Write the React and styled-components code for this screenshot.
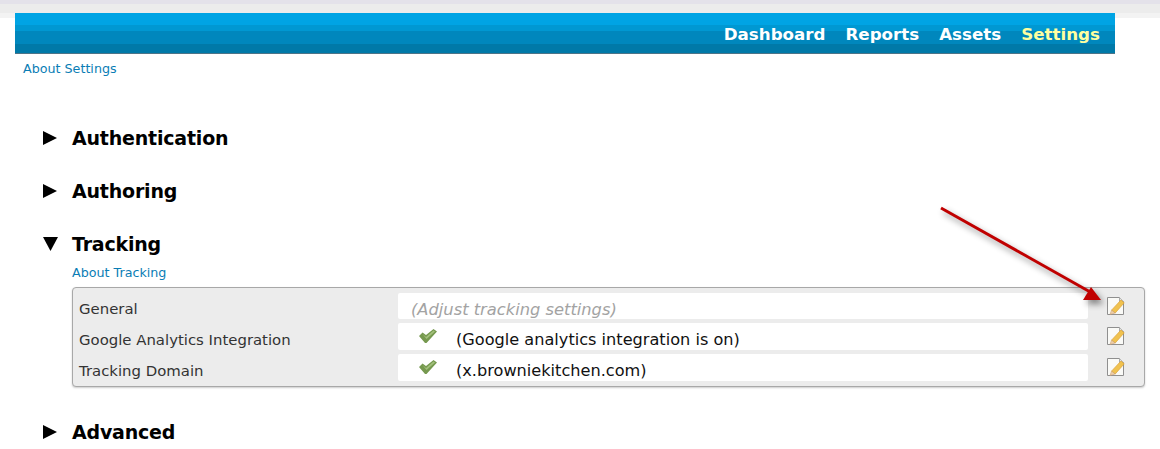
import styled, { createGlobalStyle } from 'styled-components';

const GlobalStyle = createGlobalStyle`
  html, body {
    margin: 0;
    padding: 0;
    background: #fff;
    font-family: "DejaVu Sans", Verdana, sans-serif;
  }
`;

const Page = styled.div`
  position: relative;
  width: 1160px;
  height: 449px;
  overflow: hidden;
`;

const TopStrip = styled.div`
  height: 13px;
  background: linear-gradient(#e4e2ea 0 4px, #ececec 4px);
`;

const NavWrap = styled.div`
  background: linear-gradient(#f3f3f3 0 5px, #fff 5px);
  padding: 0 45px 0 15px;
`;

const Nav = styled.nav`
  height: 41px;
  box-sizing: border-box;
  display: flex;
  justify-content: flex-end;
  align-items: center;
  gap: 20px;
  padding: 2px 15px 0 0;
  border-bottom: 1px solid #4d7488;
  background: linear-gradient(
    #00a4e4 0 12px,
    #0098d2 12px 18px,
    #0087bd 18px 31px,
    #0079a8 31px
  );
`;

const NavLink = styled.a`
  font-size: 16.7px;
  font-weight: 700;
  color: ${(p) => (p.$active ? '#ffffa0' : '#fff')};
`;

const HelpLink = styled.a`
  display: block;
  font-size: 12.7px;
  line-height: 16px;
  color: #0a7db5;
`;

const TopHelp = styled.div`
  padding: 7px 0 0 23px;
`;

const Sections = styled.div`
  padding: 49px 15px 0 43px;
`;

const Section = styled.section`
  margin-bottom: 29px;
`;

const Heading = styled.div`
  display: flex;
  align-items: center;
  height: 24px;
`;

const Caret = styled.svg`
  width: 15px;
  height: 16px;
  margin-right: 14px;
  flex: none;
`;

const Title = styled.h2`
  margin: 0;
  font-size: 19px;
  font-weight: 700;
  letter-spacing: -0.2px;
  color: #000;
`;

const Body = styled.div`
  padding: 0 0 4px 29px;
`;

const SubHelp = styled.div`
  padding: 9px 0 6px;
`;

const Panel = styled.div`
  box-sizing: border-box;
  height: 100px;
  padding: 5px 0 0 6px;
  background: #ececec;
  border: 1px solid #a8a8a8;
  border-radius: 4px;
  box-shadow: 0 1px 2px #ccc;
  display: flex;
  flex-direction: column;
  gap: 4px;
`;

const Row = styled.div`
  display: flex;
  align-items: center;
  height: 27px;

  &:first-child {
    height: 26px;
  }
`;

const RowLabel = styled.div`
  width: 319px;
  flex: none;
  padding-top: 6px;
  font-size: 14.9px;
  color: #333;
`;

const RowValue = styled.div`
  width: 690px;
  height: 100%;
  flex: none;
  display: flex;
  align-items: center;
  background: #fff;
  border-radius: 2px;
  font-size: 16.15px;
  color: #111;
`;

const ValueText = styled.span`
  padding-top: 6px;
`;

const Hint = styled(ValueText)`
  padding-left: 13px;
  font-size: 16.3px;
  font-style: italic;
  color: #a3a3a3;
`;

const Check = styled.svg`
  width: 18px;
  height: 14px;
  margin: 0 19px 2px 21px;
  flex: none;
`;

const EditIcon = styled.svg`
  width: 19px;
  height: 20px;
  margin: 0 0 1px 18px;
  flex: none;
`;

const Arrow = styled.svg`
  position: absolute;
  left: 930px;
  top: 200px;
  width: 190px;
  height: 110px;
  overflow: visible;
  pointer-events: none;
  filter: drop-shadow(3px 4px 3px rgba(0, 0, 0, 0.45));
`;

const CaretIcon = ({ open }) => (
  <Caret viewBox="0 0 15 16">
    <path d={open ? 'M0 1h15L7.5 15z' : 'M0 1l14 7-14 7z'} fill="#000" />
  </Caret>
);

const CheckMark = () => (
  <Check viewBox="0 0 18 14">
    <path d="M0 7L3.5 3.5L7 6L14.5 0L18 2.5L7.5 14H6z" fill="#76994f" />
    <path d="M3.5 5L7 8L14.5 1.5L16 2.5L7.5 10z" fill="#a3c07c" />
  </Check>
);

const Pencil = () => (
  <EditIcon viewBox="0 0 19 20">
    <path d="M1.5 1.5h12l4 4v13h-16z" fill="#fafaf7" stroke="#8f8f8f" />
    <path d="M13.5 1.5v4h4" fill="#e4e4e0" stroke="#aaa" />
    <path d="M15 4l3.2 2.8-9 10.2-3.7-2.8z" fill="#f0c24e" stroke="#dca035" strokeWidth="0.7" />
    <path d="M5.5 14.2l3.7 2.8-5.2 1.5z" fill="#efcfa8" stroke="#c09468" strokeWidth="0.5" />
  </EditIcon>
);

const rows = [
  { label: 'General', hint: '(Adjust tracking settings)' },
  { label: 'Google Analytics Integration', text: '(Google analytics integration is on)' },
  { label: 'Tracking Domain', text: '(x.browniekitchen.com)' },
];

const App = () => (
  <Page>
    <GlobalStyle />
    <TopStrip />
    <NavWrap>
      <Nav>
        <NavLink>Dashboard</NavLink>
        <NavLink>Reports</NavLink>
        <NavLink>Assets</NavLink>
        <NavLink $active>Settings</NavLink>
      </Nav>
    </NavWrap>
    <TopHelp>
      <HelpLink>About Settings</HelpLink>
    </TopHelp>
    <Sections>
      <Section>
        <Heading>
          <CaretIcon />
          <Title>Authentication</Title>
        </Heading>
      </Section>
      <Section>
        <Heading>
          <CaretIcon />
          <Title>Authoring</Title>
        </Heading>
      </Section>
      <Section>
        <Heading>
          <CaretIcon open />
          <Title>Tracking</Title>
        </Heading>
        <Body>
          <SubHelp>
            <HelpLink>About Tracking</HelpLink>
          </SubHelp>
          <Panel>
            {rows.map((r) => (
              <Row key={r.label}>
                <RowLabel>{r.label}</RowLabel>
                <RowValue>
                  {r.hint ? (
                    <Hint>{r.hint}</Hint>
                  ) : (
                    <>
                      <CheckMark />
                      <ValueText>{r.text}</ValueText>
                    </>
                  )}
                </RowValue>
                <Pencil />
              </Row>
            ))}
          </Panel>
        </Body>
      </Section>
      <Section>
        <Heading>
          <CaretIcon />
          <Title>Advanced</Title>
        </Heading>
      </Section>
    </Sections>
    <Arrow viewBox="0 0 190 110">
      <path d="M11 8L162 93" stroke="#c00000" strokeWidth="3" />
      <path d="M153 100L161 87L171 100z" fill="#c00000" />
    </Arrow>
  </Page>
);

export default App;
